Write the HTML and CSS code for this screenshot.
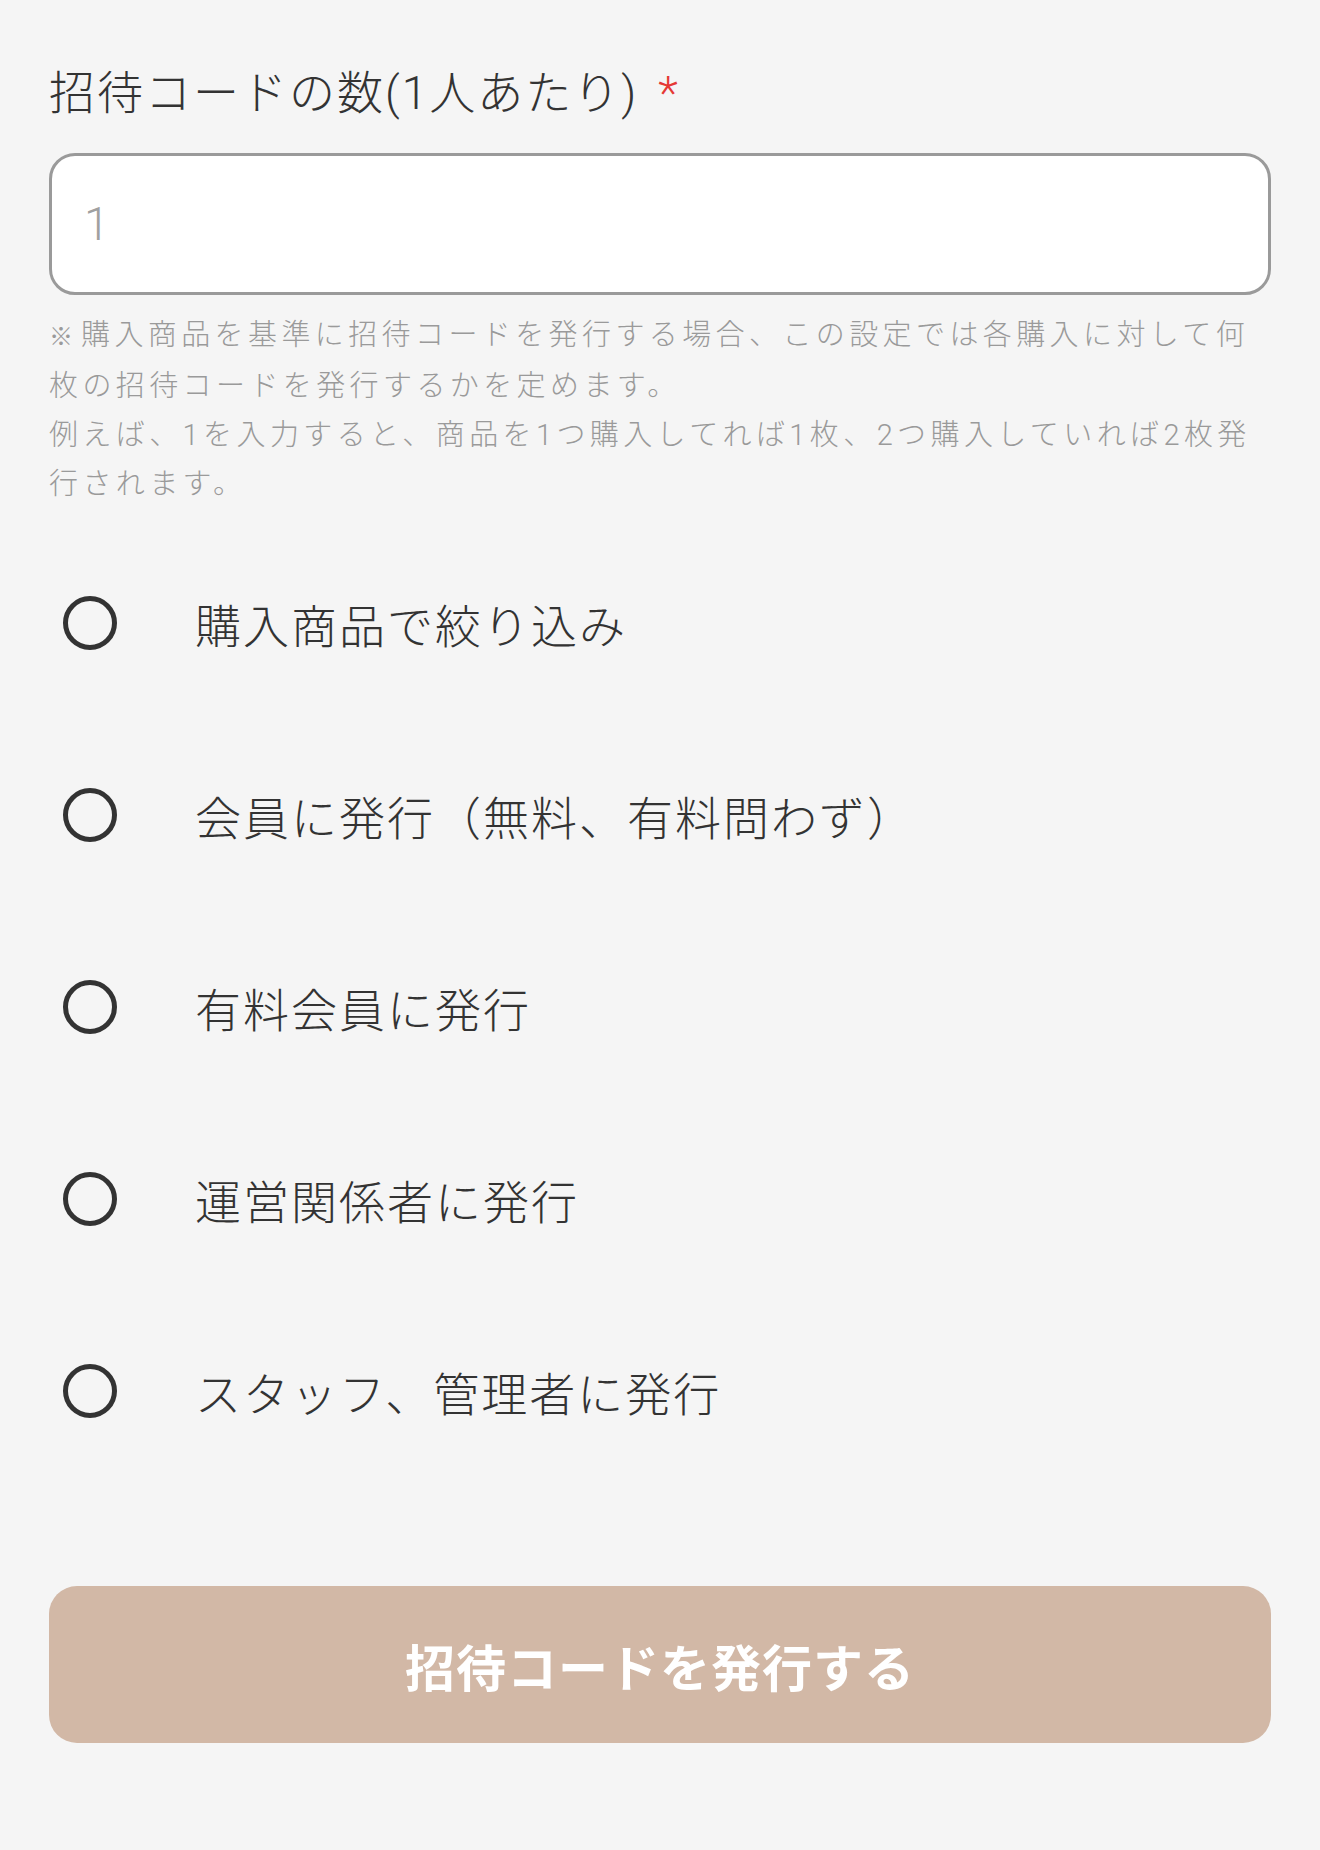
FILE: index.html
```html
<!DOCTYPE html>
<html lang="ja">
<head>
<meta charset="utf-8">
<title>招待コード発行</title>
<link rel="stylesheet" href="styles.css">
</head>
<body>
<form class="page">
  <label class="field-label" for="count">招待コードの数(1人あたり)<span class="req">*</span></label>
  <input id="count" class="code-input" type="text" placeholder="1">
  <p class="help"><span class="kome">※</span>購入商品を基準に招待コードを発行する場合、この設定では各購入に対して何枚の招待コードを発行するかを定めます。<br>例えば、1を入力すると、商品を1つ購入してれば1枚、2つ購入していれば2枚発行されます。</p>
  <ul class="radios">
    <li class="radio-row"><span class="radio"></span><span class="radio-text">購入商品で絞り込み</span></li>
    <li class="radio-row"><span class="radio"></span><span class="radio-text">会員に発行（無料、有料問わず）</span></li>
    <li class="radio-row"><span class="radio"></span><span class="radio-text">有料会員に発行</span></li>
    <li class="radio-row"><span class="radio"></span><span class="radio-text">運営関係者に発行</span></li>
    <li class="radio-row"><span class="radio"></span><span class="radio-text">スタッフ、管理者に発行</span></li>
  </ul>
  <button type="button" class="submit">招待コードを発行する</button>
</form>
</body>
</html>
```
FILE: styles.css
```css
html, body {
  margin: 0;
  padding: 0;
  background: #f5f5f5;
}
body {
  font-family: Roboto, "Noto Sans CJK JP", sans-serif;
  font-weight: 300;
  color: #333;
}
.page {
  padding: 61px 49px 0 49px;
  display: flex;
  flex-direction: column;
}
.field-label {
  font-size: 46px;
  line-height: 64px;
  letter-spacing: 2px;
  color: #333;
}
.req {
  color: #e53935;
  margin-left: 20px;
}
.code-input {
  margin-top: 28px;
  height: 142px;
  box-sizing: border-box;
  border: 3px solid #9a9a9a;
  border-radius: 26px;
  background: #fff;
  padding: 0 32px;
  font-family: Roboto, "Noto Sans CJK JP", sans-serif;
  font-weight: 300;
  font-size: 46px;
  color: #333;
  outline: none;
}
.code-input::placeholder {
  color: #a0a0a0;
}
.help {
  margin: 16px 0 0 0;
  font-size: 29px;
  line-height: 49px;
  letter-spacing: 4.4px;
  color: #9a9a9a;
}
.kome {
  font-size: 24px;
  letter-spacing: 0;
  font-weight: 400;
  margin-right: 8px;
}
.radios {
  list-style: none;
  margin: 18px 0 0 0;
  padding: 0;
}
.radio-row {
  height: 192px;
  display: flex;
  align-items: center;
}
.radio {
  width: 54px;
  height: 54px;
  box-sizing: border-box;
  border: 5px solid #333;
  border-radius: 50%;
  margin-left: 14px;
  flex: none;
}
.radio-text {
  margin-left: 78px;
  font-size: 46px;
  letter-spacing: 2px;
  color: #333;
}
.submit {
  margin-top: 99px;
  height: 157px;
  border: none;
  border-radius: 28px;
  background: #d2b8a6;
  color: #fff;
  font-family: "Noto Sans CJK JP", sans-serif;
  font-size: 50px;
  font-weight: 700;
  letter-spacing: 1px;
}
```
